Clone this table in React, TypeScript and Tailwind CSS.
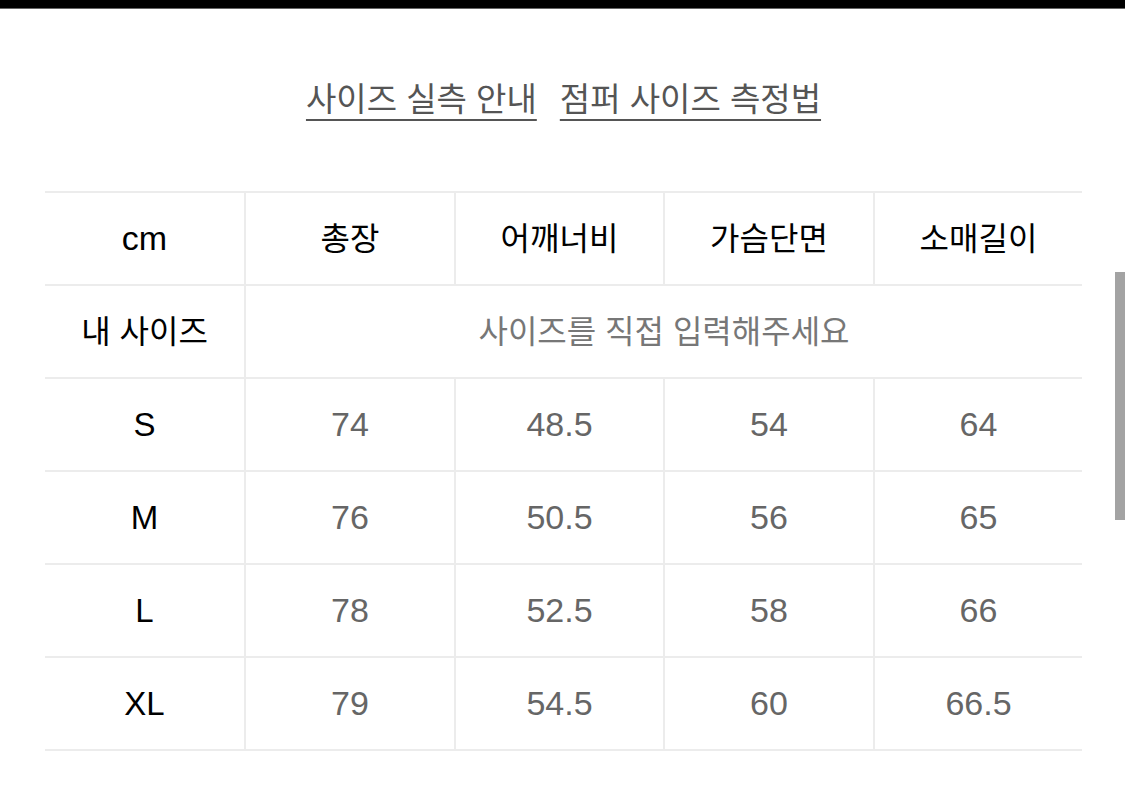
import React from "react";

const cols = ["총장", "어깨너비", "가슴단면", "소매길이"];

const rows: { size: string; values: string[] }[] = [
  { size: "S", values: ["74", "48.5", "54", "64"] },
  { size: "M", values: ["76", "50.5", "56", "65"] },
  { size: "L", values: ["78", "52.5", "58", "66"] },
  { size: "XL", values: ["79", "54.5", "60", "66.5"] },
];

const font = { fontFamily: '"Liberation Sans", "Noto Sans CJK KR", sans-serif' };

const grid = "grid grid-cols-[199px_210px_209px_210px_209px] h-[93px] border-b-2 border-[#ececec]";
const cell = "flex items-center justify-center border-l-2 border-[#ececec]";

export default function App() {
  return (
    <div className="relative w-[1125px] h-[788px] bg-white overflow-hidden" style={font}>
      <div className="h-[9px] bg-black border-b border-[#666]" />

      <div className="w-[1037px] ml-[45px]">
        <div className="flex justify-center gap-[23px] pt-[70px] text-[33px] leading-[42px] text-[#555]">
          <span className="underline decoration-2 underline-offset-[8px]">사이즈 실측 안내</span>
          <span className="underline decoration-2 underline-offset-[8px]">점퍼 사이즈 측정법</span>
        </div>

        <div className="mt-[70px] border-t-2 border-[#ececec]">
          <div className={grid}>
            <div className="flex items-center justify-center text-[34px] text-black">cm</div>
            {cols.map((c) => (
              <div key={c} className={`${cell} text-[32px] text-black`}>
                {c}
              </div>
            ))}
          </div>

          <div className="grid grid-cols-[199px_838px] h-[93px] border-b-2 border-[#ececec]">
            <div className="flex items-center justify-center text-[32px] text-black">내 사이즈</div>
            <div className={`${cell} text-[32px] text-[#777]`}>사이즈를 직접 입력해주세요</div>
          </div>

          {rows.map((r) => (
            <div key={r.size} className={grid}>
              <div className="flex items-center justify-center text-[33px] text-black">{r.size}</div>
              {r.values.map((v, i) => (
                <div key={i} className={`${cell} text-[34px] text-[#666]`}>
                  {v}
                </div>
              ))}
            </div>
          ))}
        </div>
      </div>

      <div className="absolute right-0 top-[272px] w-[10px] h-[248px] bg-[#a3a3a3]" />
    </div>
  );
}
